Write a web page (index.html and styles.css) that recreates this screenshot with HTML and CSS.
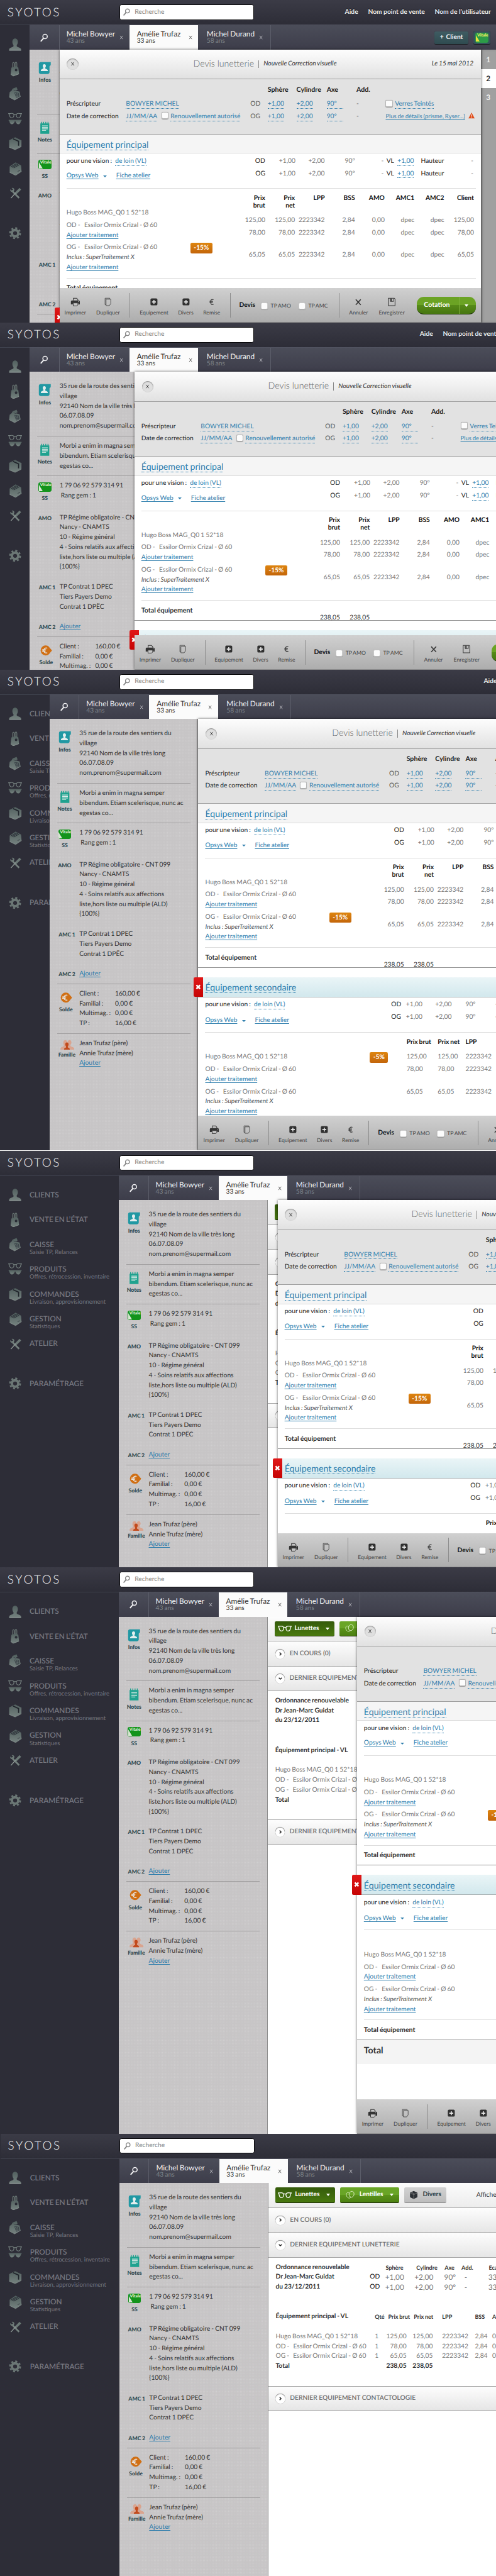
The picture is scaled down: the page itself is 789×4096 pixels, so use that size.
FILE: index.html
```html
<!DOCTYPE html>
<html lang="fr">
<head>
<meta charset="utf-8">
<title>Syotos</title>
<link rel="stylesheet" href="styles.css">
</head>
<body>
<svg class="defs" aria-hidden="true">
  <defs>
    <linearGradient id="steel" x1="0" y1="0" x2="0" y2="1">
      <stop offset="0" stop-color="#52605f"/>
      <stop offset="1" stop-color="#75827f"/>
    </linearGradient>
  </defs>
  <symbol id="i-client" viewBox="0 0 28 30"><path d="M14 3c3.500 0 5.500 3 5.500 6.500 0 3-1 5-2.200 6.500v2.500c0 1.500 8.700 3 8.700 6V27H2v-2.500c0-3 8.700-4.500 8.700-6V16C9.500 14.500 8.500 12.500 8.500 9.500 8.500 6 10.500 3 14 3z" fill="url(#steel)"/><path d="M2 26.600h24" stroke="#aab3b1"/></symbol>
  <symbol id="i-bag" viewBox="0 0 28 30"><path d="M9 12V4.500C9 1 12 .5 12 4v6M14 11V3.500C14.500 0 17.500.5 17.500 4v7" fill="none" stroke="#65716f" stroke-width="1.600"/><path d="M6.500 12l9-3 5 3 1.500 13-12 4.500-5-4z" fill="url(#steel)"/><circle cx="16" cy="17" r="2.600" fill="#2b2d36"/><path d="M5 25.500l5 3.700 11.500-4.300" fill="none" stroke="#98a29f" stroke-width=".8"/></symbol>
  <symbol id="i-cash" viewBox="0 0 28 30"><path d="M9 5l8-3 2 5-4 2 8 2 2 10-12 7-11-6 1-10 4-3z" fill="url(#steel)"/><path d="M11 8l5 2M13 13l8 1 1.500 7-6 2z" fill="none" stroke="#343c42"/><path d="M15 16l7 1M15 19l7 1M17 13.500l1 8M20 14l1 7" stroke="#343c42" stroke-width=".9"/><path d="M2 22l11 6 12-7" fill="none" stroke="#98a29f" stroke-width=".8"/></symbol>
  <symbol id="i-glasses2" viewBox="0 0 28 30"><g fill="none" stroke="#75807f" stroke-width="1.500"><path d="M1 4.500h4c3-1 6 0 6.500 2C12 11 10 13 7.500 13S3 11 2.500 7zM27 4.500h-4c-3-1-6 0-6.500 2C16 11 18 13 20.500 13S25 11 25.500 7z"/><path d="M11.500 6.500q2.500-1.500 5 0"/></g><path d="M1 17h26v2l-1.500 1c-.5 4-2.500 6-5 6s-5-2-6-6h-1c-1 4-3.500 6-6 6s-4.500-2-5-6L1 19z" fill="url(#steel)"/></symbol>
  <symbol id="i-box" viewBox="0 0 28 30"><path d="M2 9l12-6 12 6v13l-12 6-12-5z" fill="url(#steel)"/><path d="M10 6l11 5v9" fill="none" stroke="#20242b" stroke-width="2.200"/><path d="M2 23l12 5 12-6V9" fill="none" stroke="#98a29f" stroke-width=".8"/></symbol>
  <symbol id="i-files" viewBox="0 0 28 30"><path d="M3 11L15 3l11 6 1 12-12 8-12-6z" fill="url(#steel)"/><path d="M5 12l12-7M8 13l12-7M11 14l11-6" stroke="#2b3138" stroke-width="1.300"/><path d="M19 21l5-2" stroke="#2b3138"/><path d="M3 23l12 6 12-8" fill="none" stroke="#98a29f" stroke-width=".8"/></symbol>
  <symbol id="i-tools" viewBox="0 0 28 30"><path d="M7 10l15 15" stroke="#75817e" stroke-width="3.400"/><path d="M4 7.500C3.500 12 7 14 11 12.500L12.500 9C12.500 5.500 10 4.500 7 5l3 3-2 2.500z" fill="#6c7976"/><path d="M24.500 6.500l-10 10" stroke="#6c7976" stroke-width="4.600"/><path d="M15 15L5.500 25.500" stroke="#8d9895" stroke-width="1.800"/></symbol>
  <symbol id="i-gear" viewBox="0 0 28 30"><circle cx="14" cy="15" r="6.500" fill="none" stroke="#6b7775" stroke-width="5"/><circle cx="14" cy="15" r="10.300" fill="none" stroke="#6b7775" stroke-width="3.400" stroke-dasharray="4.040 4.050"/></symbol>
  <symbol id="i-search" viewBox="0 0 16 16"><circle cx="9.800" cy="5.600" r="4" fill="none" stroke="currentColor" stroke-width="1.700"/><path d="M7 8.800L2 14.600" stroke="currentColor" stroke-width="2.200"/></symbol>
  <symbol id="i-x" viewBox="0 0 10 12"><path d="M1.500 1.500l7 9M8.500 1.500l-7 9" fill="none" stroke="currentColor" stroke-width="1.300"/></symbol>
  <symbol id="i-bold-x" viewBox="0 0 12 12"><path d="M2 2l8 8M10 2l-8 8" fill="none" stroke="currentColor" stroke-width="3.600"/></symbol>
  <symbol id="i-infos" viewBox="0 0 26 26"><path d="M5 1h20v6l-2.500 2.500V21a4 4 0 0 1-4 4H5a4 4 0 0 1-4-4V5a4 4 0 0 1 4-4z" fill="#2198a3"/><path d="M12 5c2 0 3.200 1.600 3.200 3.600 0 1.500-.6 2.700-1.300 3.400v1.500c0 1 5.100 1.500 5.100 4V19H5v-1.500c0-2.500 5.100-3 5.100-4V12c-.7-.7-1.300-1.900-1.300-3.400C8.800 6.600 10 5 12 5z" fill="#e4eeee"/></symbol>
  <symbol id="i-notes" viewBox="0 0 26 26"><path d="M4 4h18v21H4z" fill="#1fa28f"/><path d="M6 1v4M10.500 1v4M15 1v4M19.500 1v4" stroke="#1fa28f" stroke-width="1.800"/><path d="M7.500 9h11.500M7.500 12h11.500M7.500 15h11.500M7.500 18h8" stroke="#dcebe8" stroke-width="1.400"/></symbol>
  <symbol id="i-solde" viewBox="0 0 26 26"><path d="M12 3c4 0 6 1.500 7.500 3.500L25 13l-5.500 6.500C18 21.500 16 23 12 23A10 10 0 0 1 12 3z" fill="#d06f14"/><path d="M15.500 8.500a5 5 0 1 0 0 9M4.800 11.500H13M4.800 14.300H12" fill="none" stroke="#e8e2dc" stroke-width="1.700"/></symbol>
  <symbol id="i-family" viewBox="0 0 30 22"><g fill="#d9a48f"><path d="M11 1c3 0 4 2.500 4 5s-1 4-2 5v2l3 2v7H1v-3c0-3 7-4 7-6v-2C7 10 7 8 7 6s1-5 4-5z"/><path d="M20 1c3 0 4 2.500 4 5s-1 4-2 5v2c0 2 8 3 8 6v3H15V12l2-1c-1-1-1-3-1-5s1-5 4-5z"/></g><path d="M14.500 6c2.500 0 3.500 2 3.500 4s-1 3.500-1.600 4.200V16c0 1.500 4.100 2 4.100 4v2h-12v-2c0-2 4.100-2.500 4.100-4v-1.800C12 13.500 11 12 11 10s1-4 3.500-4z" fill="#c24a1c"/></symbol>
  <symbol id="i-print" viewBox="0 0 20 18"><path d="M6 6V1.500h6.500L15 4v2" fill="none" stroke="#333" stroke-width="1.300"/><path d="M3 6h14a2 2 0 0 1 2 2v6h-3v-3H5v3H1V8a2 2 0 0 1 2-2z" fill="#333"/><path d="M5.700 11h9.300v4l-2 2H5.700z" fill="#c6c6c6" stroke="#333" stroke-width="1.200"/><circle cx="16" cy="8.400" r=".8" fill="#ccc"/></symbol>
  <symbol id="i-copy" viewBox="0 0 20 18"><path d="M6 14.500H4V1.500h9.500V3" fill="none" stroke="#444" stroke-width="1.100"/><path d="M6 3.500h9.500v9l-3 4H6z" fill="none" stroke="#444" stroke-width="1.100"/></symbol>
  <symbol id="i-plus" viewBox="0 0 20 18"><rect x="3" y="2" width="14" height="14" rx="2.500" fill="#303030"/><path d="M10 5v8M6 9h8" stroke="#e8e8e8" stroke-width="2"/></symbol>
  <symbol id="i-euro" viewBox="0 0 20 18"><path d="M13.500 4.500c-4-2-6 1-6 4.500s2 6.500 6 4.500M5.500 7.800h7M5.500 10.300h6.500" fill="none" stroke="#3a3a3a" stroke-width="1.500"/></symbol>
  <symbol id="i-cancel" viewBox="0 0 20 18"><path d="M5 4l10 11M15 4L5 15" stroke="#3a3a3a" stroke-width="2"/></symbol>
  <symbol id="i-save" viewBox="0 0 20 18"><path d="M3.500 1.500h12L17 3v13.500H3.500z" fill="none" stroke="#3a3a3a" stroke-width="1.400"/><path d="M7.500 2v6H14V2" fill="none" stroke="#3a3a3a" stroke-width="1.200"/><path d="M8 2h2.500v5.500H8z" fill="#3a3a3a"/></symbol>
  <symbol id="i-specs" viewBox="0 0 28 14"><g fill="none" stroke="#fff" stroke-width="1.600"><path d="M1 2.500h3c3-.8 7 0 7.500 2C12 9.500 10 12 7.500 12S3 10 2.500 5.500zM27 2.500h-3c-3-.8-7 0-7.500 2C16 9.500 18 12 20.500 12S25 10 25.500 5.500z"/><path d="M11.500 5q2.500-1.500 5 0"/></g></symbol>
  <symbol id="i-lens" viewBox="0 0 20 18"><g fill="none" stroke="#e4f2d0" stroke-width="1.200"><ellipse cx="13" cy="7.500" rx="5.500" ry="6.800" transform="rotate(15 13 7.500)"/><path d="M8 5C3 2 .5 5.500 1.500 10S7 17.500 10 15.500c1-.7 1-2 .5-3"/></g></symbol>
  <symbol id="i-cube" viewBox="0 0 18 18"><path d="M9 1l7.500 3.500v9L9 17l-7.500-3.500v-9z" fill="#2c3035"/><path d="M2 5l7 3.500L16 5M9 8.500V17M4 3.500L11 7" fill="none" stroke="#9a9a9a" stroke-width=".8"/></symbol>
  <symbol id="i-warn" viewBox="0 0 14 13"><path d="M7 0l7 13H0z" fill="#e04e1b"/><path d="M7 4v5M7 10.300v1.400" stroke="#fff" stroke-width="1.500"/></symbol>
  <symbol id="i-right" viewBox="0 0 10 10"><path d="M3.500 2l3 3-3 3" fill="none" stroke="#222" stroke-width="1.800"/></symbol>
  <symbol id="i-down" viewBox="0 0 10 10"><path d="M2 3.500l3 3 3-3" fill="none" stroke="#222" stroke-width="1.800"/></symbol>
</svg>
<main class="board" id="board"></main>
<script src="app.js"></script>
</body>
</html>
```

FILE: styles.css
```css
* { box-sizing: border-box; }
html { background: #fff; }
body { margin: 0; height: 4096px; overflow: hidden; font-family: Lato, "Open Sans", sans-serif; text-rendering: geometricPrecision; }
.defs { position: absolute; width: 0; height: 0; }
a { color: inherit; text-decoration: none; }

.board { zoom: 0.7886; width: 1001px; font-size: 13px; line-height: 20px; word-spacing: -0.7px; color: #333; }
.frame { overflow: hidden; background: #2d2d37; }
.frame-3 { border-bottom: 1px solid #fff; }
.frame-6 { padding-left: 1px; }
.app { display: flex; flex-direction: column; height: 100%; }

/* Top bar */
.topbar { flex: none; height: 50px; display: flex; align-items: center; background: linear-gradient(#3b3b46, #2d2d37); }
.logo { width: 225.500px; margin-left: 15px; font-size: 24px; font-weight: 300; letter-spacing: 3.200px; color: #f2f2f4; }
.search { width: 272px; height: 31px; display: flex; align-items: center; gap: 8px; padding-left: 6px; background: #fff; border: 1.500px solid #08080a; border-radius: 4px; color: #858585; }
.search svg { width: 16px; height: 16px; }
.links { margin-left: auto; padding-right: 10px; display: flex; gap: 20px; font-weight: 700; color: #ececef; white-space: nowrap; word-spacing: 0; text-shadow: 0 -1px 0 #111; }

.body { flex: 1; min-height: 0; display: flex; }
.main { flex: 1; min-width: 0; display: flex; flex-direction: column; }

/* Navigation rail */
.nav { flex: none; overflow: hidden; padding-top: 15px; background: #2d2d37; border-top: 1px solid #3f424e; color: #767780; }
.nav-item { height: 50px; width: 240px; display: flex; }
.nav-item svg { flex: none; width: 28px; height: 30px; margin: 8px 15.500px 0 16px; }
.nav-text { padding-top: 14px; white-space: nowrap; font-size: 12px; line-height: 16px; word-spacing: 0; }
.nav-text b { display: block; font-size: 15px; line-height: 18px; font-weight: 600; word-spacing: -1px; }
.nav-item.last { margin-top: 31px; }

/* Client tabs */
.tabs { flex: none; height: 50px; display: flex; background: linear-gradient(#4b4d59, #3d3d4a); border-top: 1px solid #50525f; color: #f4f4f6; }
.tab-search { width: 60px; display: grid; place-items: center; border-right: 1px solid #5b5d69; }
.tab-search svg { width: 18px; height: 18px; }
.tab { display: flex; align-items: center; justify-content: space-between; padding: 0 12px 0 14px; white-space: nowrap; }
.tab b { display: block; font-weight: 400; font-size: 15px; line-height: 17px; }
.tab span { display: block; line-height: 15px; color: #7d858c; }
.tab svg { width: 8px; height: 9px; color: #d4d4d8; }
.tab-1 { width: 141px; }
.tab-2 { width: 139px; padding-left: 15px; background: #fbfbfb; color: #333; }
.tab-2 span, .tab-2 svg { color: #333; }
.tab-3 { width: 147px; padding: 0 15px 0 17px; border-right: 1px solid #5b5d69; }
.tab-actions { margin-left: auto; display: flex; gap: 10px; padding: 12px 11px 0 0; }
.btn-client { width: 69px; height: 26px; border-radius: 3px; background: linear-gradient(#3f5c62, #2f4b50); box-shadow: 0 1px 1px #1a1c20; text-align: center; font-weight: 700; line-height: 25px; }
.btn-vitale { width: 34px; height: 26px; padding: 3px 4px; border-radius: 3px; background: #34535a; box-shadow: 0 1px 1px #1a1c20; }

.vitale { position: relative; display: block; overflow: hidden; width: 26px; height: 19px; border-radius: 4px; background: #13941b; font-size: 8.500px; line-height: 12px; font-weight: 900; color: #e4f2dc; padding-left: 3.500px; }
.vitale::before { content: ""; position: absolute; left: 1px; top: 5px; border-left: 8px solid transparent; border-bottom: 13px solid #d9e6d4; transform: scaleX(-1); }
.btn-vitale .vitale { background: #2c9c48; color: #f3ef68; height: 20px; }
.btn-vitale .vitale::before { border-bottom-color: #e9e13c; }

/* Stage holding the client sheet, the list and the quotation sheet */
.stage { position: relative; flex: 1; min-height: 0; display: flex; background: #fff; }

.sheet { flex: none; width: 300px; padding: 10px 15px; background-color: #c7c5c6; background-image: radial-gradient(rgba(255, 255, 255, .2) .7px, transparent 1px); background-size: 3px 3px; border-right: 1px solid #8c8c8c; }
.sheet-row { display: grid; grid-template-columns: 45px 1fr; padding: 10px 0; white-space: nowrap; }
.sheet-row.ruled { padding-bottom: 9px; border-bottom: 1px solid #a09e9f; }
.sheet-key { width: 31px; display: flex; flex-direction: column; align-items: center; font-size: 11px; font-weight: 900; color: #2f4a51; }
.sheet-key svg { flex: none; width: 26px; height: 26px; margin: 4px 0 1px; }
.sheet-key .vitale { margin: 2px 0 3px; }
.sheet-key.wide { padding-left: 9px; }
.sheet-key.mid { padding-left: 5px; }
.sheet-key.family svg { width: 30px; height: 21px; margin: 1px 0 0; }
.money { display: grid; grid-template-columns: 72px 1fr; }
.sheet a { color: #2a7bab; text-decoration: underline; text-underline-offset: 2px; }

/* Equipment list */
.list { flex: 1; min-width: 460px; background: #fff; white-space: nowrap; }
.list-bar { height: 50px; display: flex; align-items: center; gap: 10px; padding-left: 14px; background: linear-gradient(#fcfcfc, #ececec); border-bottom: 1px solid #a5a5a5; }
.btn { height: 31px; display: flex; align-items: center; border-radius: 3px; font-weight: 700; color: #fff; border-bottom: 1px solid #1d2b08; }
.btn-lunettes { width: 121px; gap: 6px; padding-left: 6px; background: linear-gradient(#345a0b, #49790f); }
.btn-lentilles { width: 119px; gap: 10px; padding-left: 11px; background: linear-gradient(#69a526 50%, #5a9319 50%, #4c8012); }
.btn-divers { width: 86px; gap: 10px; padding-left: 10px; background: linear-gradient(#d2d2d2, #bcbcbc); border-color: #8a8a8a; color: #27414a; }
.btn svg { width: 18px; height: 18px; }
.btn-lunettes svg { width: 28px; height: 14px; }
.caret { width: 0; height: 0; border: 4px solid transparent; border-top: 6px solid currentColor; border-bottom: 0; }
.btn .caret { margin-left: 7px; }
.btn-lentilles .caret { margin-left: 3px; }
.list-filter { margin-left: 50px; }
.list-head { height: 50px; display: flex; align-items: center; gap: 9px; padding: 1px 0 0 15px; background: linear-gradient(#fdfdfd, #e6e6e6); border-bottom: 1px solid #a5a5a5; color: #6f6f6f; font-weight: 600; word-spacing: 0; }
.list-head.detached { border-top: 1px solid #a5a5a5; }
.bullet { width: 20px; height: 20px; display: grid; place-items: center; border-radius: 50%; background: #fff; box-shadow: inset 0 1px 1px #777, 0 0 1px #999; }
.bullet svg { width: 10px; height: 10px; }
.rx { display: grid; grid-template-columns: 190px 31px 59px 60px 34px 55px 1fr; grid-auto-rows: 20px; padding: 10px 0 0 15px; font-size: 15px; color: #777; }
.rx b { font-size: 13px; color: #333; }
.rx .h { font-size: 11.500px; padding-left: 1px; }
.rx .h.in { padding-left: 4px; }
.rx .od { font-size: 13px; color: #111; }
.rx .dash { padding-left: 7px; }
.eq { display: grid; grid-template-columns: 200px 17px 47px 53px 19px 66px 35px 1fr; grid-auto-rows: 20px; padding: 40px 0 0 15px; height: 189px; color: #777; }
.eq b { color: #333; }
.eq .h { font-size: 11.500px; }
.eq .r { text-align: right; }
.eq .h.r { margin: 0 -1px 0 -9px; }
.eq .h.r.first { margin-right: -7px; }
.eq .gap { grid-column: 1 / -1; height: 10px; }
.eq .gap, .eq .sum { position: static; }

/* Quotation sheet, sliding over the list */
.quote { position: absolute; top: 0; bottom: 0; width: 850px; display: flex; flex-direction: column; background: #fff; box-shadow: 0 0 5px rgba(0, 0, 0, .6); white-space: nowrap; }
.quote-body { flex: 1; min-height: 0; }
.quote-head { height: 60px; display: flex; align-items: center; padding: 0 15px 0 15px; background: linear-gradient(#fdfdfd, #e1e1e1); border-bottom: 1px solid #a0a0a0; color: #333; font-style: italic; }
.close { width: 23px; height: 23px; border-radius: 50%; background: #dfdfdf; box-shadow: inset 0 1px 2px #777; display: grid; place-items: center; color: #111; }
.close svg { width: 9px; height: 9px; }
.quote-title { margin: 0 9px 0 232px; padding-right: 9px; border-right: 1px solid #888; font-size: 18px; line-height: 16px; font-weight: 300; font-style: normal; color: #666; word-spacing: 0; }
.quote-date { margin-left: auto; }

.link { color: #3180ae; border-bottom: 1px dotted #3180ae; }
.solid { color: #3180ae; text-decoration: underline; text-underline-offset: 2px; }
.val { display: inline-block; line-height: 15px; }
.w33 { min-width: 33px; }
.check { display: inline-block; width: 14px; height: 14px; vertical-align: -2px; border: 1px solid #b5b5b5; border-radius: 3px; background: #fcfcfc; box-shadow: 0 1px 1px #999; }

.presc { height: 111px; padding: 11px 0 0 14px; display: grid; grid-template-columns: 120px 251px 35px 58px 61px 60px 59px 1fr; grid-template-rows: 27px 25px 25px; align-content: start; background: #e2e2e2; border-bottom: 1px solid #a0a0a0; color: #222; }
.presc > * { line-height: 25px; }
.presc > b { line-height: 20px; font-size: 13.500px; }
.presc .check { margin: 0 2px 0 8px; }
.presc .extra .check { margin-left: 0; }
.presc .muted { color: #555; }
.presc .extra .solid { font-size: 12px; }
.presc .extra svg { width: 13px; height: 12px; margin-left: 7px; vertical-align: -1px; }

.eq-title { height: 39px; padding: 10px 14px 0; background: #f5f5f5; border-bottom: 1px solid #d9d9d9; font-size: 18px; line-height: 22px; }
.eq-title.second { position: relative; height: 41px; background: linear-gradient(#eaf5f7, #d2e8ed); border-bottom-color: #a9b2b4; margin-top: 19px; padding-top: 11px; }
.eq-title .link { line-height: 19px; }
.remove { position: absolute; left: -10px; top: 0; width: 19px; height: 40px; display: grid; place-items: center; border-radius: 3px 0 0 3px; background: linear-gradient(#e01818, #c60404); color: #fff; }
.remove svg { width: 11px; height: 11px; }

.vision { display: grid; height: 71px; padding-top: 3px; margin: 0 10px 0 14px; border-bottom: 1px solid #ddd; color: #777; }
.vision > * { line-height: 25px; }
.vision-1 { grid-template-columns: 341px 60px 61px 59px 61px 58px 21px 40px 61px 59px; grid-template-rows: 25px 25px; text-align: right; }
.vision-2 { grid-template-columns: 375px 30px 59px 61px 60px 1fr; grid-template-rows: 25px 25px; }
.vision .dark { color: #222; }
.vision .lead { text-align: left; color: #222; }
.vision .lead .val { margin-left: 4px; }
.vision .tools { text-align: left; padding-top: 10px; color: #3180ae; display: flex; align-items: center; }
.vision .tools .caret { margin: 0 19px 0 9px; border-width: 5px 4px 0; }
.vision-2 .tools { padding-top: 13px; }

.lines { margin: 0 10px 0 14px; border-bottom: 1px solid #ddd; color: #777; }
.line { display: grid; }
.lines-1 .line, .total-1 { grid-template-columns: 245px 96px 60px 60px 60px 61px 60px 60px 60px 60px; }
.lines-1 .line > :nth-child(n+3), .total-1 > :nth-child(n+3) { text-align: right; padding-top: 15px; }
.lines-1 .line.head { padding-top: 12px; height: 37px; }
.lines-1 .line.head > b { padding-top: 0; white-space: normal; line-height: 15px; padding-left: 22px; color: #111; }
.lines-2 .line { grid-template-columns: 332px 74px 63px 56px 1fr; }
.lines-2 .line.head { height: 38px; padding-top: 10px; color: #111; }
.line.one { height: 25px; padding-top: 2px; }
.line.two { height: 45px; padding-top: 2px; }
.line.three { height: 72px; padding-top: 2px; }
.lines em { display: block; color: #555; }
.lines .item-side { display: inline-block; width: 36px; }
.badge { justify-self: start; height: 21px; padding: 0 7px; border-radius: 3px; background: linear-gradient(#de850f, #c3650a); color: #fff; font-weight: 700; line-height: 21px; }
.lines-1 .badge { margin-left: 5px; }
.total-1, .total-2 { height: 40px; padding: 10px 10px 0 14px; border-bottom: 1px solid #8f8f8f; }
.total-1 { display: grid; }
.total-1 b, .total-2 b { font-size: 13.500px; }
.total-all { height: 49px; padding: 12px 14px 0; background: #f4f4f4; font-size: 18px; font-weight: 700; }

/* Action bar */
.actions { position: relative; flex: none; height: 69px; display: flex; padding: 10px 10px 0; background: linear-gradient(#d0d0d0, #adadad); border-bottom: 1px solid #8f8f8f; font-size: 11px; color: #444; }
.act { display: flex; flex-direction: column; align-items: center; line-height: 20px; padding-top: 9px; }
.act svg { width: 20px; height: 18px; margin-bottom: 2px; }
.sep { width: 1px; height: 49px; background: #8d8d8d; }
.act-print { width: 44px; }
.act-copy { width: 50px; margin: 0 19px 0 19px; }
.act-eq { width: 58px; margin-left: 19px; }
.act-div { width: 34px; margin: 0 18px; }
.act-rem { width: 35px; margin-right: 19px; }
.act-opts { width: 219px; display: flex; align-items: center; padding: 0 0 0 18px; height: 51px; font-size: 11px; }
.act-opts b { font-size: 13px; color: #111; margin-right: 11px; }
.act-opts .check { margin-right: 6px; border-color: #ccc; }
.act-opts span + .check { margin-left: 15px; }
.act-cancel { width: 40px; margin-left: 19px; }
.act-save { width: 56px; margin: 0 22px 0 19px; }
.cotation { width: 120px; height: 35px; margin-top: 8px; display: flex; align-items: center; border-radius: 14px; background: linear-gradient(#6ba324 50%, #568a18 50%, #467610); border-bottom: 1px solid #22380a; color: #fff; font-size: 13.500px; font-weight: 700; }
.cotation span { width: 87px; padding-left: 15px; line-height: 34px; border-right: 1px solid #7eb13c; }
.cotation .caret { margin-left: 10px; }

/* Pager */
.pager { position: absolute; left: 910px; top: 0; bottom: 0; width: 30px; padding-top: 2px; background: #a0a0a0; box-shadow: inset 3px 0 4px -1px #777; font-size: 15px; font-weight: 700; text-align: center; color: #f0f0f0; }
.pager span { display: block; height: 38px; line-height: 38px; }
.pager .on { background: #fff; color: #333; }
```

FILE: app.js
```js
const icon = (id) => `<svg><use href="#i-${id}"/></svg>`;

const navItems = [
  ['client', 'CLIENTS', ''],
  ['bag', 'VENTE EN L’ÉTAT', ''],
  ['cash', 'CAISSE', 'Saisie TP, Relances'],
  ['glasses2', 'PRODUITS', 'Offres, rétrocession, inventaire'],
  ['box', 'COMMANDES', 'Livraison, approvisionnement'],
  ['files', 'GESTION', 'Statistiques'],
  ['tools', 'ATELIER', ''],
  ['gear', 'PARAMÉTRAGE', '', 'last'],
];

const nav = (width) => `<nav class="nav" style="width:${width}px">${navItems.map(
  ([id, label, sub, cls]) => `<div class="nav-item ${cls || ''}">${icon(id)}<div class="nav-text"><b>${label}</b>${sub}</div></div>`
).join('')}</nav>`;

const topbar = `
<header class="topbar">
  <div class="logo">SYOTOS</div>
  <div class="search">${icon('search')}<span>Recherche</span></div>
  <div class="links"><a>Aide</a><a>Nom point de vente</a><a>Nom de l’utilisateur</a></div>
</header>`;

const tab = (n, name, age) => `<div class="tab tab-${n}"><div><b>${name}</b><span>${age} ans</span></div>${icon('x')}</div>`;
const tabs = `
<div class="tabs">
  <div class="tab-search">${icon('search')}</div>
  ${tab(1, 'Michel Bowyer', 43)}${tab(2, 'Amélie Trufaz', 33)}${tab(3, 'Michel Durand', 58)}
  <div class="tab-actions"><div class="btn-client">+ &nbsp;Client</div><div class="btn-vitale"><span class="vitale">Vitale</span></div></div>
</div>`;

const sheetRow = (key, content, cls = '', keyCls = '') =>
  `<div class="sheet-row ${cls}"><div class="sheet-key ${keyCls}">${key}</div><div>${content}</div></div>`;

const sheet = `
<aside class="sheet">
  ${sheetRow(icon('infos') + 'Infos', '35 rue de la route des sentiers du<br>village<br>92140 Nom de la ville très long<br>06.07.08.09<br>nom.prenom@supermail.com', 'ruled')}
  ${sheetRow(icon('notes') + 'Notes', 'Morbi a enim in magna semper<br>bibendum. Etiam scelerisque, nunc ac<br>egestas co...', 'ruled')}
  ${sheetRow('<span class="vitale">Vitale</span>SS', '1 79 06 92 579 314 91<br>&nbsp;Rang gem : 1')}
  ${sheetRow('AMO', 'TP Régime obligatoire - CNT 099<br>Nancy - CNAMTS<br>10 - Régime général<br>4 - Soins relatifs aux affections<br>liste,hors liste ou multiple (ALD)<br>{100%}')}
  ${sheetRow('AMC&nbsp;1', 'TP Contrat 1 DPEC<br>Tiers Payers Demo<br>Contrat 1 DPËC', '', 'wide')}
  ${sheetRow('AMC&nbsp;2', '<a>Ajouter</a>', 'ruled', 'wide')}
  ${sheetRow(icon('solde') + 'Solde', '<div class="money"><span>Client :</span><span>160,00 €</span><span>Familial :</span><span>0,00 €</span><span>Multimag. :</span><span>0,00 €</span><span>TP :</span><span>16,00 €</span></div>', 'ruled', 'mid')}
  ${sheetRow(icon('family') + 'Famille', 'Jean Trufaz (père)<br>Annie Trufaz (mère)<br><a>Ajouter</a>', '', 'wide family')}
</aside>`;

const rxRow = (name) => `<b>${name}</b><span class="od">OD</span><span>+1,00</span><span>+2,00</span><span>90º</span><span class="dash">-</span><span>33</span>`;
const eqRow = (name, price) => `<span>${name}</span><span>1</span><span class="r">${price}</span><span class="r">${price}</span><span></span><span>2223342</span><span>2,84</span><span>0,00</span>`;

const list = `
<section class="list">
  <div class="list-bar">
    <div class="btn btn-lunettes">${icon('specs')}Lunettes<i class="caret"></i></div>
    <div class="btn btn-lentilles">${icon('lens')}Lentilles<i class="caret"></i></div>
    <div class="btn btn-divers">${icon('cube')}Divers</div>
    <span class="list-filter">Afficher</span>
  </div>
  <div class="list-head"><span class="bullet">${icon('right')}</span>EN COURS (0)</div>
  <div class="list-head"><span class="bullet">${icon('down')}</span>DERNIER EQUIPEMENT LUNETTERIE</div>
  <div class="rx">
    <b>Ordonnance renouvelable</b><span></span><b class="h">Sphère</b><b class="h in">Cylindre</b><b class="h">Axe</b><b class="h">Add.</b><b class="h">Ecart</b>
    ${rxRow('Dr Jean-Marc Guidat')}
    ${rxRow('du 23/12/2011')}
  </div>
  <div class="eq">
    <b>Équipement principal - VL</b><b class="h">Qté</b><b class="h r first">Prix brut</b><b class="h r">Prix net</b><span></span><b class="h">LPP</b><b class="h">BSS</b><b class="h">AMO</b>
    <span class="gap"></span>
    ${eqRow('Hugo Boss MAG_Q0 1 52*18', '125,00')}
    ${eqRow('OD - &nbsp; Essilor Ormix Crizal - Ø 60', '78,00')}
    ${eqRow('OG - &nbsp; Essilor Ormix Crizal - Ø 60', '65,05')}
    <b class="sum">Total</b><span></span><b class="r sum">238,05</b><b class="r sum">238,05</b>
  </div>
  <div class="list-head detached"><span class="bullet">${icon('right')}</span>DERNIER EQUIPEMENT CONTACTOLOGIE</div>
</section>`;

const lk = (text, cls = '') => `<span class="link val ${cls}">${text}</span>`;
const prescRow = (label, value, side, extra) =>
  `<span>${label}</span><span>${value}</span><span class="muted">${side}</span><span>${lk('+1,00')}</span><span>${lk('+2,00')}</span><span>${lk('90º', 'w33')}</span><span class="muted">-</span><span class="extra">${extra}</span>`;

const tools = '<div class="tools"><a class="solid">Opsys Web</a><i class="caret"></i><a class="solid">Fiche atelier</a></div>';
const lead = `<span class="lead">pour une vision : ${lk('de loin (VL)')}</span>`;
const visionCells = (side) => `<span class="dark">${side}</span><span>+1,00</span><span>+2,00</span><span>90º</span><span>-</span>`;
const visionExtra = `<span class="dark">VL</span><span>${lk('+1,00')}</span><span class="dark">Hauteur</span><span>-</span>`;

const frameName = 'Hugo Boss MAG_Q0 1 52*18';
const glass = (side) => `<div><span class="item-side">${side} -</span>Essilor Ormix Crizal - Ø 60<br><a class="solid">Ajouter traitement</a></div>`;
const glassIncluded = '<div><span class="item-side">OG -</span>Essilor Ormix Crizal - Ø 60<em>Inclus : SuperTraitement X</em><a class="solid">Ajouter traitement</a></div>';
const cells = (values) => values.map((v) => `<span>${v}</span>`).join('');
const fullCells = (price) => cells([price, price, '2223342', '2,84', '0,00', 'dpec', 'dpec', price]);
const shortCells = (price) => cells([price, price, '2223342']);
const act = (cls, id, label) => `<div class="act act-${cls}">${icon(id)}${label}</div>`;

const quote = (left) => `
<article class="quote" style="left:${left}px">
  <div class="quote-body">
    <div class="quote-head"><span class="close">${icon('x')}</span><span class="quote-title">Devis lunetterie</span>Nouvelle Correction visuelle<span class="quote-date">Le 15 mai 2012</span></div>
    <div class="presc">
      <b></b><b></b><b></b><b>Sphère</b><b>Cylindre</b><b>Axe</b><b>Add.</b><b></b>
      ${prescRow('Préscripteur', lk('BOWYER MICHEL'), 'OD', `<i class="check"></i> ${lk('Verres Teintés')}`)}
      ${prescRow('Date de correction', `${lk('JJ/MM/AA')}<i class="check"></i> ${lk('Renouvellement autorisé')}`, 'OG', `<a class="solid">Plus de détails (prisme, Ryser...)</a>${icon('warn')}`)}
    </div>
    <div class="eq-title">${lk('Équipement principal')}</div>
    <div class="vision vision-1">${lead}${visionCells('OD')}${visionExtra}${tools}${visionCells('OG')}${visionExtra}</div>
    <div class="lines lines-1">
      <div class="line head"><span></span><span></span><b>Prix brut</b><b>Prix net</b><b>LPP</b><b>BSS</b><b>AMO</b><b>AMC1</b><b>AMC2</b><b>Client</b></div>
      <div class="line one"><span>${frameName}</span><span></span>${fullCells('125,00')}</div>
      <div class="line two">${glass('OD')}<span></span>${fullCells('78,00')}</div>
      <div class="line three">${glassIncluded}<span class="badge">-15%</span>${fullCells('65,05')}</div>
    </div>
    <div class="total-1"><b>Total équipement</b><span></span><span>238,05</span><span>238,05</span></div>
    <div class="eq-title second"><span class="remove">${icon('bold-x')}</span>${lk('Équipement secondaire')}</div>
    <div class="vision vision-2">${lead}${visionCells('OD')}${tools}${visionCells('OG')}</div>
    <div class="lines lines-2">
      <div class="line head"><span></span><span></span><b>Prix brut</b><b>Prix net</b><b>LPP</b></div>
      <div class="line one"><span>${frameName}</span><span class="badge">-5%</span>${shortCells('125,00')}</div>
      <div class="line two">${glass('OD')}<span></span>${shortCells('78,00')}</div>
      <div class="line three">${glassIncluded}<span></span>${shortCells('65,05')}</div>
    </div>
    <div class="total-2"><b>Total équipement</b></div>
    <div class="total-all">Total</div>
  </div>
  <footer class="actions">
    ${act('print', 'print', 'Imprimer')}${act('copy', 'copy', 'Dupliquer')}<i class="sep"></i>
    ${act('eq', 'plus', 'Equipement')}${act('div', 'plus', 'Divers')}${act('rem', 'euro', 'Remise')}<i class="sep"></i>
    <div class="act-opts"><b>Devis</b><i class="check"></i><span>TP AMO</span><i class="check"></i><span>TP AMC</span></div><i class="sep"></i>
    ${act('cancel', 'cancel', 'Annuler')}${act('save', 'save', 'Enregistrer')}
    <div class="cotation"><span>Cotation</span><i class="caret"></i></div>
  </footer>
</article>`;

const pager = '<div class="pager"><span>1</span><span class="on">2</span><span>3</span></div>';

// One entry per step: total height, app width, rail width, quotation offset inside the stage.
const steps = [
  { h: 650, w: 1000, nav: 60, quote: 60, pager: true },
  { h: 700, w: 1151, nav: 60, quote: 211 },
  { h: 970, w: 1280, nav: 100, quote: 300 },
  { h: 840, w: 1440, nav: 240, quote: 320 },
  { h: 1142, w: 1600, nav: 240, quote: 480 },
  { h: 893, w: 1600, nav: 240 },
];

document.getElementById('board').innerHTML = steps.map((s, i) => `
<section class="frame frame-${i + 1}" style="height:${s.h}px">
  <div class="app" style="width:${s.w}px">
    ${topbar}
    <div class="body">
      ${nav(s.nav)}
      <div class="main">
        ${tabs}
        <div class="stage">${sheet}${list}${s.pager ? pager : ''}${s.quote ? quote(s.quote) : ''}</div>
      </div>
    </div>
  </div>
</section>`).join('');
```
